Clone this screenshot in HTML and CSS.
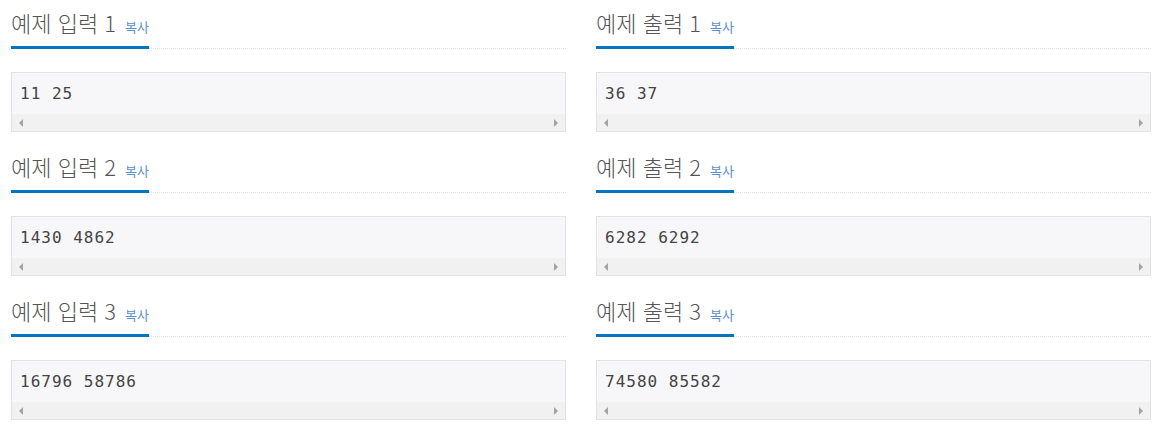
FILE: index.html
```html
<!DOCTYPE html>
<html lang="ko">
<head>
<meta charset="utf-8">
<title>예제</title>
<link rel="stylesheet" href="styles.css">
</head>
<body>
<div class="grid">
  <section class="sample">
    <h2 class="headline"><span class="title">예제 입력 1<span class="copy">복사</span></span></h2>
    <div class="box"><pre class="data">11 25</pre><div class="bar"><i class="arr left"></i><i class="arr right"></i></div></div>
  </section>
  <section class="sample">
    <h2 class="headline"><span class="title">예제 출력 1<span class="copy">복사</span></span></h2>
    <div class="box"><pre class="data">36 37</pre><div class="bar"><i class="arr left"></i><i class="arr right"></i></div></div>
  </section>
  <section class="sample">
    <h2 class="headline"><span class="title">예제 입력 2<span class="copy">복사</span></span></h2>
    <div class="box"><pre class="data">1430 4862</pre><div class="bar"><i class="arr left"></i><i class="arr right"></i></div></div>
  </section>
  <section class="sample">
    <h2 class="headline"><span class="title">예제 출력 2<span class="copy">복사</span></span></h2>
    <div class="box"><pre class="data">6282 6292</pre><div class="bar"><i class="arr left"></i><i class="arr right"></i></div></div>
  </section>
  <section class="sample">
    <h2 class="headline"><span class="title">예제 입력 3<span class="copy">복사</span></span></h2>
    <div class="box"><pre class="data">16796 58786</pre><div class="bar"><i class="arr left"></i><i class="arr right"></i></div></div>
  </section>
  <section class="sample">
    <h2 class="headline"><span class="title">예제 출력 3<span class="copy">복사</span></span></h2>
    <div class="box"><pre class="data">74580 85582</pre><div class="bar"><i class="arr left"></i><i class="arr right"></i></div></div>
  </section>
</div>
</body>
</html>
```
FILE: styles.css
```css
html, body {
  margin: 0;
  padding: 0;
  background: #fff;
}
.grid {
  display: grid;
  grid-template-columns: 555px 555px;
  column-gap: 30px;
  padding-left: 11px;
}
.sample {
  height: 144px;
}
.headline {
  display: flex;
  margin: 0;
  padding-top: 10px;
  border-bottom: 1px dotted #e2e2e2;
  font-family: "Noto Sans CJK KR", "Noto Sans", sans-serif;
  font-weight: 300;
  font-size: 22px;
  line-height: 24px;
  color: #555;
}
.title {
  display: block;
  padding-bottom: 7px;
  margin-bottom: -1px;
  border-bottom: 3px solid #0076c0;
  white-space: pre;
}
.copy {
  margin-left: 9px;
  font-size: 13px;
  font-weight: normal;
  color: #5b8fd3;
}
.box {
  margin-top: 23px;
  border: 1px solid #e1e1e6;
  background: #f7f7f9;
}
.data {
  margin: 0;
  height: 41px;
  box-sizing: border-box;
  padding: 11px 0 0 8px;
  font-family: "DejaVu Sans Mono", monospace;
  font-size: 16px;
  line-height: 20px;
  letter-spacing: 1px;
  color: #444;
}
.bar {
  height: 17px;
  background: #f1f1f1;
  display: flex;
  justify-content: space-between;
  align-items: center;
  padding: 0 7px;
}
.arr {
  width: 0;
  height: 0;
  border-top: 4px solid transparent;
  border-bottom: 4px solid transparent;
}
.arr.left {
  border-right: 4px solid #a3a3a3;
}
.arr.right {
  border-left: 4px solid #a3a3a3;
}
```
